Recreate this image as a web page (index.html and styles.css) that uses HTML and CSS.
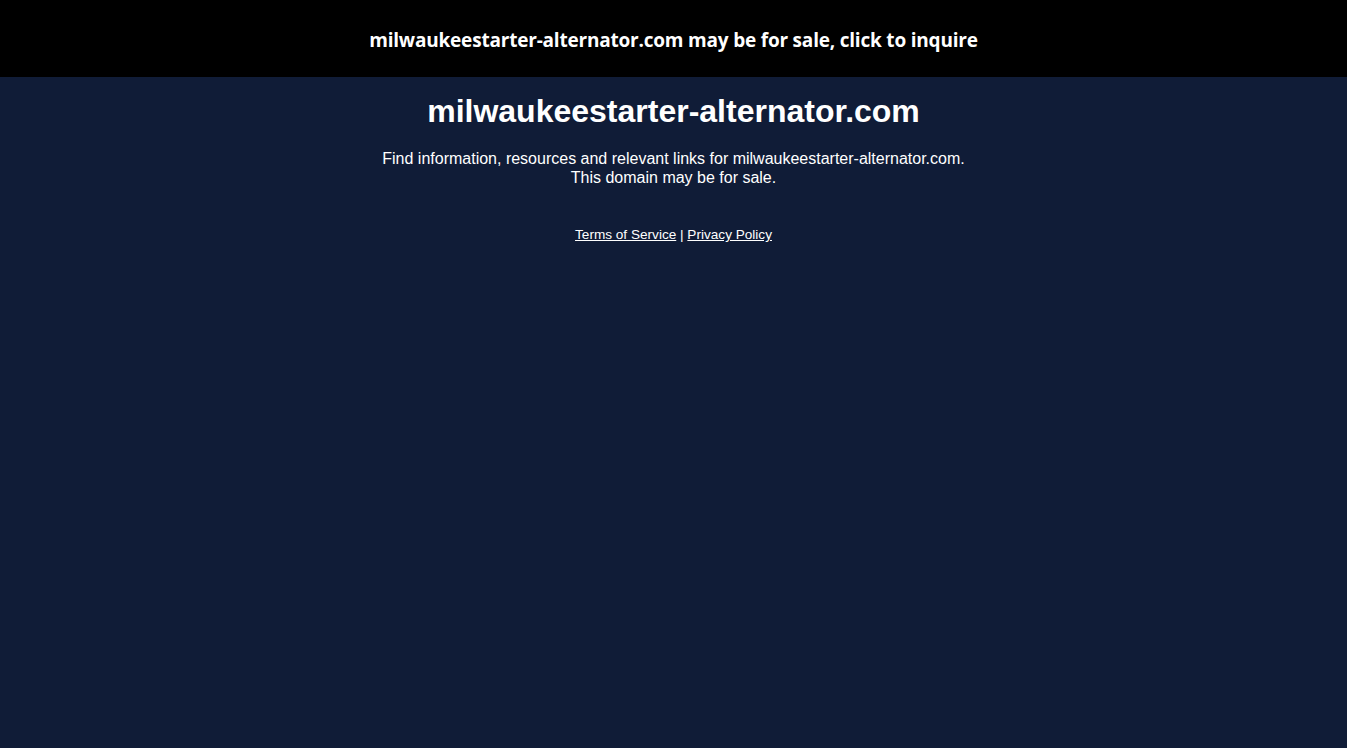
FILE: index.html
```html
<!DOCTYPE html>
<html>
<head>
<meta charset="utf-8">
<link rel="stylesheet" href="styles.css">
</head>
<body>
<div class="banner"><a href="#" class="banner-link">milwaukeestarter-alternator.com may be for sale, click to inquire</a></div>
<main class="content">
<h1 class="title">milwaukeestarter-alternator.com</h1>
<p class="desc">Find information, resources and relevant links for milwaukeestarter-alternator.com.<br>This domain may be for sale.</p>
<p class="links"><a href="#">Terms of Service</a> | <a href="#">Privacy Policy</a></p>
</main>
</body>
</html>
```
FILE: styles.css
```css
html, body { margin: 0; padding: 0; }
body { background: #101c37; color: #fff; font-family: "Liberation Sans", Arial, sans-serif; min-height: 748px; }
.banner { background: #000; height: 77px; display: flex; align-items: center; justify-content: center; padding-top: 2px; box-sizing: border-box; }
.banner-link { color: #fff; text-decoration: none; font-family: "Open Sans", "Noto Sans", sans-serif; font-weight: 700; font-size: 19px; letter-spacing: -0.2px; }
.content { text-align: center; padding-top: 16px; }
.title { margin: 0; font-size: 32px; font-weight: 700; line-height: 37px; }
.desc { margin: 19px 0 0; font-size: 16px; line-height: 19px; }
.links { margin: 40px 0 0; font-size: 13.6px; line-height: 16px; }
.links a { color: #fff; }
```
